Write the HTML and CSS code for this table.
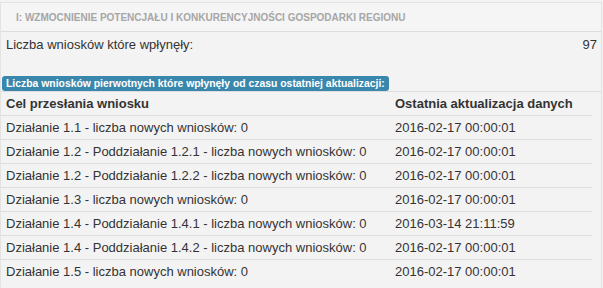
FILE: index.html
```html
<!DOCTYPE html>
<html lang="pl">
<head>
    <meta charset="UTF-8">
    <title>Statystyka wniosków</title>
    <link rel="stylesheet" href="styles.css">
</head>
<body>
    <div class="panel">
        <div class="panel-heading">I: Wzmocnienie potencjału i konkurencyjności gospodarki regionu</div>
        <div class="panel-body">
            <div class="stat-row">
                <span>Liczba wniosków które wpłynęły:</span>
                <span>97</span>
            </div>
            <span class="label">Liczba wniosków pierwotnych które wpłynęły od czasu ostatniej aktualizacji:</span>
            <div class="table-wrap">
                <table class="stats-table">
                    <thead>
                        <tr>
                            <th>Cel przesłania wniosku</th>
                            <th>Ostatnia aktualizacja danych</th>
                        </tr>
                    </thead>
                    <tbody>
                        <tr><td>Działanie 1.1 - liczba nowych wniosków: 0</td><td>2016-02-17 00:00:01</td></tr>
                        <tr><td>Działanie 1.2 - Poddziałanie 1.2.1 - liczba nowych wniosków: 0</td><td>2016-02-17 00:00:01</td></tr>
                        <tr><td>Działanie 1.2 - Poddziałanie 1.2.2 - liczba nowych wniosków: 0</td><td>2016-02-17 00:00:01</td></tr>
                        <tr><td>Działanie 1.3 - liczba nowych wniosków: 0</td><td>2016-02-17 00:00:01</td></tr>
                        <tr><td>Działanie 1.4 - Poddziałanie 1.4.1 - liczba nowych wniosków: 0</td><td>2016-03-14 21:11:59</td></tr>
                        <tr><td>Działanie 1.4 - Poddziałanie 1.4.2 - liczba nowych wniosków: 0</td><td>2016-02-17 00:00:01</td></tr>
                        <tr><td>Działanie 1.5 - liczba nowych wniosków: 0</td><td>2016-02-17 00:00:01</td></tr>
                    </tbody>
                </table>
            </div>
        </div>
    </div>
</body>
</html>
```

FILE: styles.css
```css
body {
    font-family: "Liberation Sans", Arial, sans-serif;
    font-size: 13px;
    color: #333;
    margin: 0;
    padding: 2px 0 0 0;
    background-color: #f3f3f3;
}
.panel {
    width: 600px;
    border: 1px solid #e3e3e3;
    border-bottom: none;
    background-color: #f3f3f3;
    height: 285px;
}
.panel-heading {
    height: 28px;
    line-height: 30px;
    padding-left: 15px;
    font-size: 10px;
    font-weight: bold;
    text-transform: uppercase;
    color: #a6a6a6;
    background-color: #f5f5f5;
    border-bottom: 1px solid #ddd;
}
.stat-row {
    display: flex;
    justify-content: space-between;
    padding: 5px 4px 0 5px;
    line-height: 16px;
    height: 38px;
}
.label {
    display: inline-block;
    margin-left: 1px;
    padding: 0 4px 0 4px;
    height: 15px;
    line-height: 15px;
    font-size: 10.4px;
    font-weight: bold;
    color: #fff;
    background-color: #3a87ad;
    border-radius: 3px;
}
.table-wrap {
    border-top: 1px solid #ddd;
}
.stats-table {
    width: 591px;
    border-collapse: collapse;
}
.stats-table th, .stats-table td {
    padding: 3px 5px;
    line-height: 17px;
    text-align: left;
    border-bottom: 1px solid #ddd;
}
.stats-table td {
    padding-top: 4px;
    padding-bottom: 3px;
    line-height: 16px;
}
.stats-table th {
    font-weight: bold;
}
.stats-table th:first-child, .stats-table td:first-child {
    width: 379px;
}
.stats-table tr:last-child td {
    border-bottom: none;
}
```
